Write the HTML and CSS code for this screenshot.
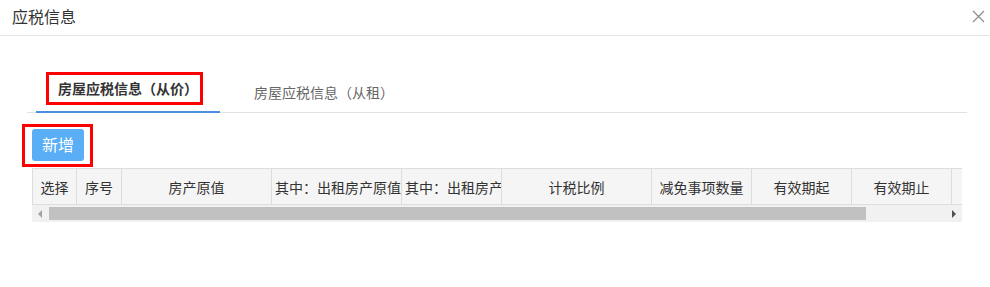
FILE: index.html
```html
<!DOCTYPE html>
<html>

<head>
	<meta charset="UTF-8">
	<title>应税信息</title>
	<link rel="stylesheet" href="styles.css">
</head>

<body>
	<div class="dialogHead">
		<span class="dialogTitle">应税信息</span>
		<span class="closeBtn">
			<svg width="13" height="13" viewBox="0 0 13 13">
				<path d="M1 1 L12 12 M12 1 L1 12" stroke="#8c8c8c" stroke-width="1.2" fill="none" />
			</svg>
		</span>
	</div>
	<div class="dialogBody">
		<div class="tabs">
			<div class="tab active"><span class="mark tabMark">房屋应税信息（从价）</span></div>
			<div class="tab">房屋应税信息（从租）</div>
		</div>
		<div class="toolbar">
			<span class="mark btnMark"><a class="addBtn">新增</a></span>
		</div>
		<div class="gridWrap">
			<div class="gridView">
				<table class="grid">
					<colgroup>
						<col style="width:44px">
						<col style="width:45px">
						<col style="width:150px">
						<col style="width:130px">
						<col style="width:100px">
						<col style="width:150px">
						<col style="width:100px">
						<col style="width:100px">
						<col style="width:100px">
						<col style="width:100px">
					</colgroup>
					<thead>
						<tr>
							<th>选择</th>
							<th>序号</th>
							<th>房产原值</th>
							<th class="left">其中：出租房产原值</th>
							<th class="left">其中：出租房产</th>
							<th>计税比例</th>
							<th>减免事项数量</th>
							<th>有效期起</th>
							<th>有效期止</th>
							<th></th>
						</tr>
					</thead>
				</table>
			</div>
			<div class="hScroll">
				<span class="arrowBtn">
					<svg width="5" height="8" viewBox="0 0 5 8"><path d="M4 0 L0 4 L4 8 Z" fill="#a3a3a3" /></svg>
				</span>
				<div class="track">
					<div class="thumb"></div>
				</div>
				<span class="arrowBtn">
					<svg width="5" height="8" viewBox="0 0 5 8"><path d="M1 0 L5 4 L1 8 Z" fill="#505050" /></svg>
				</span>
			</div>
		</div>
	</div>
</body>

</html>
```

FILE: styles.css
```css
body {
	font-family: "Noto Sans CJK SC", "Noto Sans", sans-serif;
	margin: 0;
	color: #333;
	background: #fff;
}

.dialogHead {
	display: flex;
	align-items: center;
	justify-content: space-between;
	height: 35px;
	padding: 0 5px 0 12px;
	border-bottom: 1px solid #e5e5e5;
}

.dialogTitle {
	font-size: 16px;
	color: #333;
	margin-top: -3px;
}

.closeBtn {
	display: flex;
	width: 13px;
	height: 13px;
	margin-top: -3px;
}

.dialogBody {
	padding-top: 36px;
}

.tabs {
	display: flex;
	margin: 0 23px 0 27px;
	border-bottom: 1px solid #e2e2e2;
	height: 40px;
}

.tab {
	font-size: 14px;
	color: #666;
	padding: 0 22px;
	line-height: 40px;
	margin-left: 12px;
}

.tab:first-child {
	margin-left: 9px;
}

.tab.active {
	font-weight: bold;
	color: #333;
	line-height: normal;
	padding: 0;
	width: 184px;
	border-bottom: 2px solid #4a90e2;
	margin-bottom: -1px;
}

.mark {
	display: inline-block;
	border: 3px solid #f00;
}

.tabMark {
	margin-left: 10px;
	padding: 3px 2px 3px 9px;
	line-height: 21px;
}

.toolbar {
	margin: 11px 0 1px 22px;
}

.btnMark {
	padding: 2px 6px 3px 7px;
}

.addBtn {
	display: block;
	width: 52px;
	height: 32px;
	line-height: 31px;
	text-align: center;
	font-size: 16px;
	color: #fff;
	background: #5aaef6;
	border-radius: 3px;
}

.gridWrap {
	width: 930px;
	margin-left: 32px;
}

.gridView {
	overflow: hidden;
	background: #f5f5f5;
}

.grid {
	border-collapse: collapse;
	table-layout: fixed;
	width: 1019px;
}

.grid th {
	height: 35px;
	padding: 0;
	font-weight: normal;
	font-size: 14px;
	color: #333;
	background: #f5f5f5;
	border: 1px solid #ddd;
	border-left: none;
	white-space: nowrap;
	overflow: hidden;
	text-align: center;
}

.grid th:first-child {
	border-left: 1px solid #ddd;
}

.grid th.left {
	text-align: left;
	padding-left: 3px;
}

.hScroll {
	display: flex;
	height: 17px;
	background: #f1f1f1;
}

.arrowBtn {
	display: flex;
	align-items: center;
	justify-content: center;
	width: 17px;
	flex: none;
}

.track {
	flex: 1;
	padding-top: 2px;
}

.thumb {
	width: 817px;
	height: 13px;
	background: #c1c1c1;
}
```
